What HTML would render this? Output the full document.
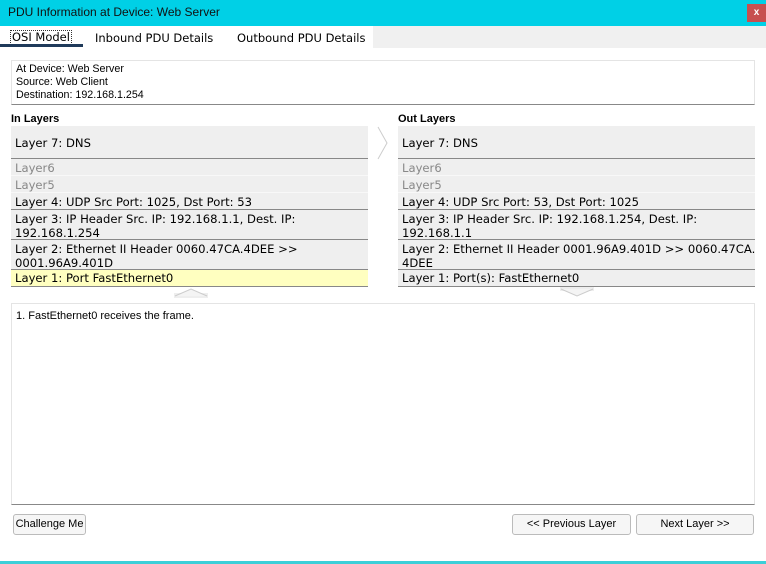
<!DOCTYPE html>
<html><head><meta charset="utf-8"><style>
*{margin:0;padding:0;box-sizing:border-box}
body{width:766px;height:564px;background:#fff;position:relative;overflow:hidden;font-family:"Liberation Sans",Arial,sans-serif;font-size:11px;color:#000}
.a{position:absolute}
.title{left:0;top:0;width:766px;height:26px;background:#00d0e6;}
.title span{position:absolute;left:8px;top:5px;font-size:12px;color:#111}
.close{left:747px;top:4px;width:19px;height:18px;background:#c75050;color:#fff;font-size:10px;font-weight:bold;text-align:center;line-height:17px}
.tabgray{left:373px;top:26px;width:393px;height:22px;background:#f0f0f0}
.tab{top:31px;font-family:"DejaVu Sans",Verdana,sans-serif;font-size:11.5px}
.info{left:11px;top:60px;width:744px;height:45px;border:1px solid #e4e4e4;border-bottom:1px solid #888;padding:2px 4px;line-height:13px;font-size:10.7px}
.hd{top:113px;font-weight:bold;font-size:11px}
.L{position:absolute;width:357px;background:#efefef;border-bottom:1px solid #888;font-family:"DejaVu Sans",Verdana,sans-serif;font-size:11.6px;padding:0 4px;line-height:14px;white-space:nowrap;overflow:hidden}
.g{color:#888;border-bottom:1px solid #f8f8f8}
.desc{left:11px;top:303px;width:744px;height:202px;border:1px solid #e4e4e4;border-bottom:1px solid #888;padding:6px 4px;font-size:11px}
.btn{top:514px;height:21px;border:1px solid #bbb;border-radius:3px;background:#f6f6f6;text-align:center;line-height:19px;font-size:11px}
</style></head><body>
<div class="a title"><span>PDU Information at Device: Web Server</span></div>
<div class="a close">x</div>
<div class="a tabgray"></div>
<div class="a tab" style="left:10px;top:30px;border:1px dotted #333;padding:0 1px;line-height:13px">OSI Model</div>
<div class="a" style="left:0;top:44px;width:83px;height:3px;background:#1f3a5a"></div>
<div class="a tab" style="left:95px">Inbound PDU Details</div>
<div class="a tab" style="left:237px">Outbound PDU Details</div>
<div class="a info">At Device: Web Server<br>Source: Web Client<br>Destination: 192.168.1.254</div>
<div class="a hd" style="left:11px">In Layers</div>
<div class="a hd" style="left:398px">Out Layers</div>

<div class="L" style="left:11px;top:126px;height:33px;line-height:34px">Layer 7: DNS</div>
<div class="L g" style="left:11px;top:159px;height:17px;line-height:19px">Layer6</div>
<div class="L g" style="left:11px;top:176px;height:17px;line-height:19px">Layer5</div>
<div class="L" style="left:11px;top:193px;height:17px;line-height:19px">Layer 4: UDP Src Port: 1025, Dst Port: 53</div>
<div class="L" style="left:11px;top:210px;height:30px;padding-top:2px">Layer 3: IP Header Src. IP: 192.168.1.1, Dest. IP:<br>192.168.1.254</div>
<div class="L" style="left:11px;top:240px;height:30px;padding-top:2px">Layer 2: Ethernet II Header 0060.47CA.4DEE &gt;&gt;<br>0001.96A9.401D</div>
<div class="L" style="left:11px;top:270px;height:17px;line-height:17px;background:#ffffc0">Layer 1: Port FastEthernet0</div>

<div class="L" style="left:398px;top:126px;height:33px;line-height:34px">Layer 7: DNS</div>
<div class="L g" style="left:398px;top:159px;height:17px;line-height:19px">Layer6</div>
<div class="L g" style="left:398px;top:176px;height:17px;line-height:19px">Layer5</div>
<div class="L" style="left:398px;top:193px;height:17px;line-height:19px">Layer 4: UDP Src Port: 53, Dst Port: 1025</div>
<div class="L" style="left:398px;top:210px;height:30px;padding-top:2px">Layer 3: IP Header Src. IP: 192.168.1.254, Dest. IP:<br>192.168.1.1</div>
<div class="L" style="left:398px;top:240px;height:30px;padding-top:2px">Layer 2: Ethernet II Header 0001.96A9.401D &gt;&gt; 0060.47CA.<br>4DEE</div>
<div class="L" style="left:398px;top:270px;height:17px;line-height:17px">Layer 1: Port(s): FastEthernet0</div>

<svg class="a" style="left:376px;top:126px" width="14" height="34"><polyline points="2,1 11,17 2,33" fill="none" stroke="#ccc"/></svg>
<svg class="a" style="left:174px;top:287px" width="34" height="11"><rect x="0" y="6" width="34" height="5" fill="#eee"/><polyline points="1,9 17,2 33,9" fill="#f4f4f4" stroke="#ccc"/></svg>
<svg class="a" style="left:560px;top:287px" width="34" height="11"><rect x="0" y="0" width="34" height="4" fill="#eee"/><polyline points="1,2 17,9 33,2" fill="#f4f4f4" stroke="#ccc"/></svg>

<div class="a desc">1. FastEthernet0 receives the frame.</div>
<div class="a btn" style="left:13px;width:73px">Challenge Me</div>
<div class="a btn" style="left:512px;width:119px">&lt;&lt; Previous Layer</div>
<div class="a btn" style="left:636px;width:118px">Next Layer &gt;&gt;</div>
<div class="a" style="left:0;top:561px;width:766px;height:3px;background:#3ccfd8"></div>
</body></html>
